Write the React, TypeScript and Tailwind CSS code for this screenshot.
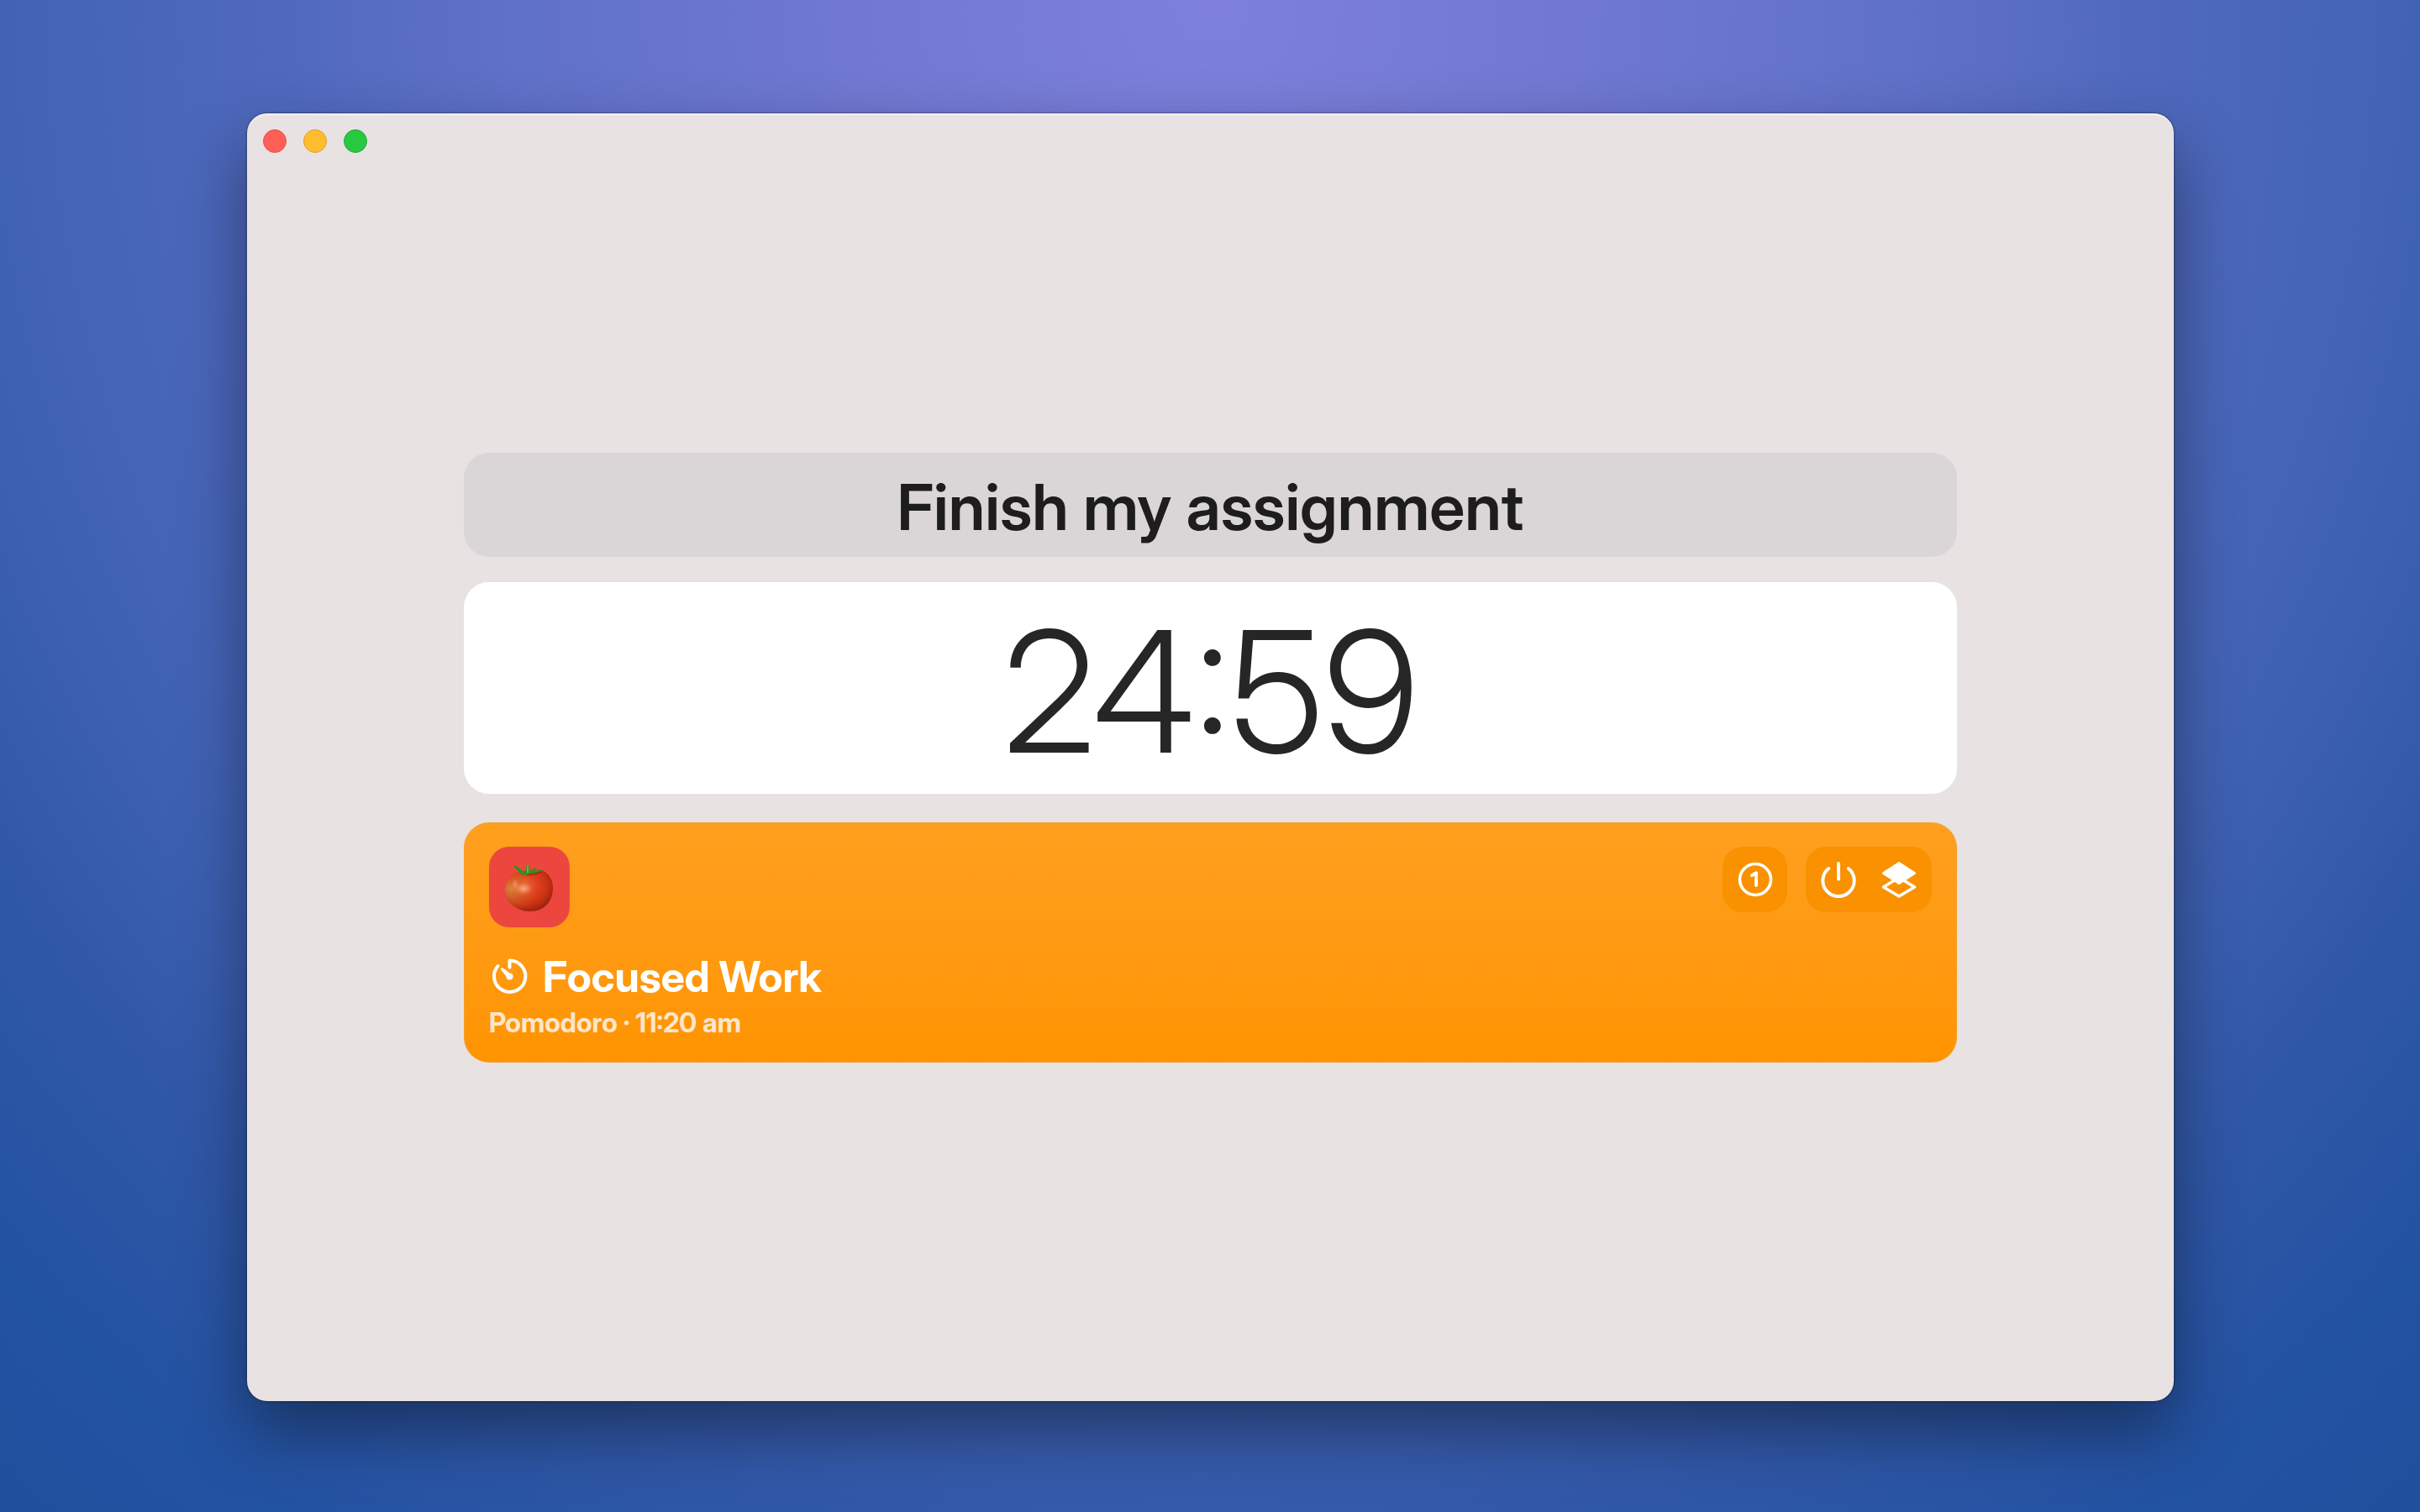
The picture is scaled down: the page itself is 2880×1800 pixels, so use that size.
import React from "react";

const trafficLights = [
  { label: "Close", className: "bg-[#ff5f57] border-[#ea4e47]" },
  { label: "Minimize", className: "bg-[#febc2e] border-[#e0a02a]" },
  { label: "Zoom", className: "bg-[#28c840] border-[#22ad34]" },
];

function TomatoIcon() {
  return (
    <svg viewBox="0 0 60 60" className="size-15" aria-hidden="true">
      <defs>
        <radialGradient id="skin" cx="0.42" cy="0.38" r="0.66">
          <stop offset="0" stopColor="#f4663f" />
          <stop offset="0.35" stopColor="#e2421f" />
          <stop offset="0.7" stopColor="#cb3213" />
          <stop offset="1" stopColor="#94220f" />
        </radialGradient>
        <radialGradient id="warm" cx="0.12" cy="0.45" r="0.6">
          <stop offset="0" stopColor="#d98a3a" stopOpacity="0.9" />
          <stop offset="1" stopColor="#c9571f" stopOpacity="0" />
        </radialGradient>
        <radialGradient id="shine">
          <stop offset="0" stopColor="#ffc0a0" stopOpacity="0.8" />
          <stop offset="1" stopColor="#ff8860" stopOpacity="0" />
        </radialGradient>
      </defs>
      <path d="M22 9C11 10 1 18 1 32c0 14 14 25 30 25 16 0 27-11 27-28 0-13-8-21-17-21-6 0-12 1-19 1z" fill="url(#skin)" />
      <path d="M22 9C11 10 1 18 1 32c0 14 14 25 30 25 16 0 27-11 27-28 0-13-8-21-17-21-6 0-12 1-19 1z" fill="url(#warm)" />
      <ellipse cx="23" cy="30" rx="11" ry="8" fill="url(#shine)" />
      <ellipse cx="13" cy="25" rx="5" ry="8" fill="url(#shine)" opacity="0.6" />
      <path d="M20 10c4 4 8 5 12 4 5 0 10-2 14-4l-14-1z" fill="#8e2410" opacity="0.6" />
      <path d="M10 2c4 0 7 2 10 5 2 2 4 3 6 4V3l4-1v8c2-3 5-5 9-5l-4 4c4-2 9-2 13-1-6 1-11 4-17 4l-5 2-6-1c-3-3-6-7-10-11z" fill="#3c8a22" />
      <path d="M27 3l2-1v9h-2z" fill="#6db33a" />
    </svg>
  );
}

function TimerIcon() {
  return (
    <svg viewBox="-2 -1 48 48" className="size-12" fill="none" stroke="#fff" strokeWidth="4" strokeLinecap="round" strokeLinejoin="round" aria-hidden="true">
      <path d="M22.5 11.500V3.500A18.700 18.700 0 1 1 8.500 10" />
      <path d="M13.500 13.500l6.500 8.500M13.500 13.500l8.500 6.500" strokeWidth="3" />
      <circle cx="22.500" cy="22.500" r="4" fill="#fff" stroke="none" />
    </svg>
  );
}

function CircledOneIcon() {
  return (
    <svg viewBox="0 0 42 42" className="size-[42px]" fill="none" stroke="#fff" strokeLinecap="round" strokeLinejoin="round" aria-hidden="true">
      <circle cx="21" cy="21" r="18.500" strokeWidth="3.600" />
      <path d="M17 16l5-2.800V28" strokeWidth="3.800" />
    </svg>
  );
}

function PowerIcon() {
  return (
    <svg viewBox="0 0 42 44" className="h-11 w-[42px]" fill="none" stroke="#fff" strokeWidth="4" strokeLinecap="round" aria-hidden="true">
      <path d="M21 3v18.500" />
      <path d="M9.100 9a18.700 18.700 0 1 0 23.800 0" />
    </svg>
  );
}

function LayersIcon() {
  return (
    <svg viewBox="0 0 42 44" className="h-11 w-[42px]" stroke="#fff" strokeLinejoin="round" strokeLinecap="round" aria-hidden="true">
      <path d="M21 2.500L39.500 14.500 21 26.500 2.500 14.500z" fill="#fff" strokeWidth="3" />
      <path d="M14 24L2.500 31 21 42 39.500 31 28 24" fill="none" strokeWidth="3.600" />
    </svg>
  );
}

export default function App() {
  return (
    <div className="flex min-h-screen w-full flex-col bg-[radial-gradient(ellipse_2200px_2376px_at_50%_0%,#7e80dc_0%,#7078d2_20%,#5f71c8_38%,#4f69bd_51%,#4263b5_65%,#3c5fb1_70%,#3158a8_78%,#2252a2_91%,#20509d_100%)] pt-[135px] pr-[293px] pb-[132px] pl-[294px] font-['Inter_Display','Inter',sans-serif]">
      <main className="flex flex-1 flex-col rounded-3xl bg-[#e8e2e2] shadow-[0_0_2px_1px_rgba(0,0,0,0.3),0_36px_80px_0_rgba(0,0,0,0.42),inset_0_2px_0_rgba(255,255,255,0.5)]">
        <header className="flex gap-5 px-[19px] pt-[19px]">
          {trafficLights.map((light) => (
            <button key={light.label} type="button" aria-label={light.label} className={`size-7 rounded-full border ${light.className}`} />
          ))}
        </header>

        <div className="flex flex-1 flex-col px-[258px] pt-[357px]">
          <input
            type="text"
            aria-label="Task"
            defaultValue="Finish my assignment"
            className="h-31 w-full rounded-[30px] bg-[#dad6d7] pt-1 text-center text-[76px] font-semibold text-[#1d1d1e] outline-none"
          />

          <div role="timer" className="mt-[30px] flex h-[252px] items-center justify-center rounded-[30px] bg-white pt-2 text-[200px] leading-none font-light text-[#262626]">
            24:59
          </div>

          <section className="mt-[34px] flex h-[286px] flex-col rounded-[30px] border border-[#f5a030] bg-linear-to-b from-[#ffa01e] to-[#ff9400] px-[29px] pt-7 text-white">
            <div className="flex items-start justify-between">
              <div className="flex size-24 items-center justify-center rounded-3xl bg-[#ed463f] pt-1">
                <TomatoIcon />
              </div>
              <div className="flex gap-[22px]">
                <button type="button" aria-label="Session 1" className="flex h-[78px] w-[77px] items-center justify-center rounded-3xl bg-[#f99100]">
                  <CircledOneIcon />
                </button>
                <div className="flex h-[78px] items-center gap-[30px] rounded-3xl bg-[#f99100] px-[18px]">
                  <button type="button" aria-label="Stop">
                    <PowerIcon />
                  </button>
                  <button type="button" aria-label="Layers">
                    <LayersIcon />
                  </button>
                </div>
              </div>
            </div>
            <h1 className="mt-8 flex items-center gap-4 text-[50px] leading-[54px] font-bold">
              <TimerIcon />
              Focused Work
            </h1>
            <p className="mt-2.5 text-[32px] leading-9 font-bold text-[#ffe6cb]">Pomodoro · 11:20 am</p>
          </section>
        </div>
      </main>
    </div>
  );
}
